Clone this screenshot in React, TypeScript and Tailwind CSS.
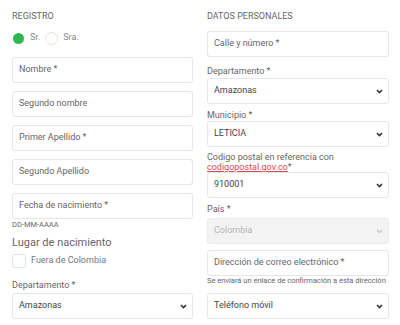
import React from "react";

const Chevron = () => (
  <svg width="7" height="5" viewBox="0 0 7 5" className="shrink-0">
    <path d="M1 1 L3.5 3.5 L6 1" fill="none" stroke="#333" strokeWidth="1.6" />
  </svg>
);

const Input = ({ text, cls = "" }: { text: string; cls?: string }) => (
  <div className={`h-[26px] border border-[#e6e6e6] rounded-[3px] bg-white flex items-center px-[6px] text-[9px] text-[#666] ${cls}`}>
    {text}
  </div>
);

const Select = ({ text, cls = "", disabled = false }: { text: string; cls?: string; disabled?: boolean }) => (
  <div
    className={`h-[26px] border rounded-[3px] flex items-center justify-between pl-[6px] pr-[5px] text-[9px] ${
      disabled ? "bg-[#f3f3f3] border-[#ececec] text-[#b5b5b5]" : "bg-white border-[#e6e6e6] text-[#444]"
    } ${cls}`}
  >
    <span>{text}</span>
    {disabled ? (
      <svg width="7" height="5" viewBox="0 0 7 5">
        <path d="M1 1 L3.5 3.5 L6 1" fill="none" stroke="#c4c4c4" strokeWidth="1.2" />
      </svg>
    ) : (
      <Chevron />
    )}
  </div>
);

export default function App() {
  return (
    <div
      className="w-[400px] h-[325px] bg-white flex gap-[14px] pl-[12px] pr-[11px] overflow-hidden"
      style={{ fontFamily: "Roboto, 'Liberation Sans', sans-serif" }}
    >
      {/* Left column */}
      <div className="w-[181px] flex flex-col pt-[10px]">
        <div className="text-[9px] leading-[12px] text-[#666]">REGISTRO</div>
        <div className="mt-[9px] h-[14px] flex items-center text-[9px] text-[#888]">
          <span className="w-[11px] h-[11px] rounded-full bg-[#2eb84f] ml-[1px]" />
          <span className="ml-[6px]">Sr.</span>
          <span className="w-[13px] h-[13px] rounded-full border border-[#e4e4e4] ml-[5px]" />
          <span className="ml-[5px]">Sra.</span>
        </div>
        <Input text="Nombre *" cls="mt-[12px]" />
        <Input text="Segundo nombre" cls="mt-[8px]" />
        <Input text="Primer Apellido *" cls="mt-[8px]" />
        <Input text="Segundo Apellido" cls="mt-[8px]" />
        <Input text="Fecha de nacimiento *" cls="mt-[8px]" />
        <div className="mt-[1px] text-[7.5px] leading-[10px] text-[#666]">DD-MM-AAAA</div>
        <div className="mt-[6px] text-[11px] leading-[14px] text-[#666]">Lugar de nacimiento</div>
        <div className="mt-[4px] h-[14px] flex items-center">
          <span className="w-[14px] h-[14px] border border-[#e4e4e4] rounded-[2px]" />
          <span className="ml-[5px] text-[9px] text-[#777]">Fuera de Colombia</span>
        </div>
        <div className="mt-[11px] text-[9px] leading-[12px] text-[#666]">Departamento *</div>
        <Select text="Amazonas" cls="mt-[2px]" />
      </div>

      {/* Right column */}
      <div className="w-[182px] flex flex-col pt-[10px]">
        <div className="text-[9px] leading-[12px] text-[#666]">DATOS PERSONALES</div>
        <Input text="Calle y número *" cls="mt-[9px]" />
        <div className="mt-[8px] text-[9px] leading-[12px] text-[#666]">Departamento *</div>
        <Select text="Amazonas" cls="mt-[1px]" />
        <div className="mt-[5px] text-[9px] leading-[12px] text-[#666]">Municipio *</div>
        <Select text="LETICIA" />
        <div className="mt-[5px] text-[9px] leading-[10px] text-[#666]">
          Codigo postal en referencia con
          <br />
          <span className="text-[#e0474c] underline">codigopostal.gov.co</span>*
        </div>
        <Select text="910001" />
        <div className="mt-[5px] text-[9px] leading-[12px] text-[#666]">País *</div>
        <Select text="Colombia" disabled cls="mt-[3px]" />
        <Input text="Dirección de correo electrónico *" cls="mt-[6px]" />
        <div className="text-[7.5px] leading-[10px] text-[#666] whitespace-nowrap">Se enviará un enlace de confirmación a esta dirección</div>
        <Select text="Teléfono móvil" cls="mt-[7px]" />
      </div>
    </div>
  );
}
